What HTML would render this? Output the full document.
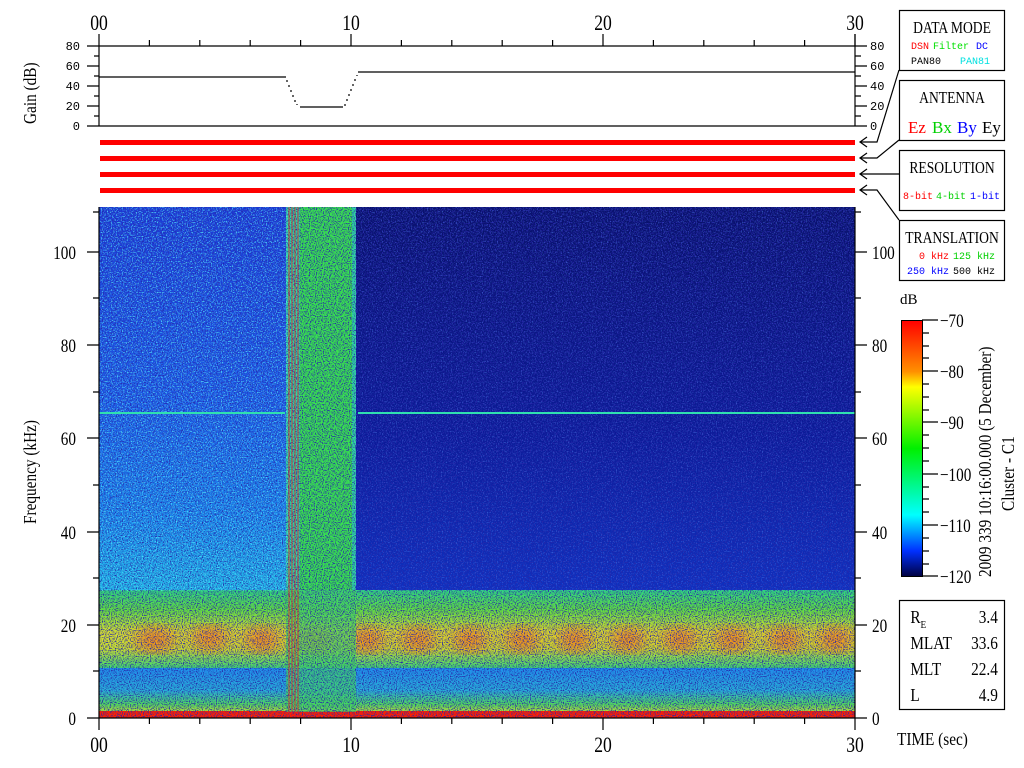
<!DOCTYPE html>
<html><head><meta charset="utf-8"><style>
html,body{margin:0;padding:0;background:#fff;width:1024px;height:768px;overflow:hidden}
svg{display:block}
.s{font-family:"Liberation Serif",serif}
.m{font-family:"Liberation Mono",monospace}
</style></head><body>
<svg width="1024" height="768" viewBox="0 0 1024 768" xmlns="http://www.w3.org/2000/svg">
<defs>
<clipPath id="sp"><rect x="99" y="207" width="756" height="511"/></clipPath>
<filter id="nd" x="0" y="0" width="100%" height="100%">
<feTurbulence type="fractalNoise" baseFrequency="0.85" numOctaves="1" seed="3" result="t"/>
<feColorMatrix in="t" type="matrix" values="0 0 0 0 0.02  0 0 0 0 0.02  0 0 0 0 0.4  4 0 0 0 -1.85"/>
</filter>
<filter id="nb" x="0" y="0" width="100%" height="100%">
<feTurbulence type="fractalNoise" baseFrequency="0.8" numOctaves="1" seed="9" result="t"/>
<feColorMatrix in="t" type="matrix" values="0 0 0 0 0.1  0 0 0 0 0.9  0 0 0 0 1  0 4 0 0 -2"/>
</filter>
<filter id="nbl" x="0" y="0" width="100%" height="100%">
<feTurbulence type="fractalNoise" baseFrequency="0.8" numOctaves="1" seed="17" result="t"/>
<feColorMatrix in="t" type="matrix" values="0 0 0 0 0.1  0 0 0 0 0.3  0 0 0 0 1  0 0 4 0 -2.1"/>
</filter>
<filter id="blob"><feGaussianBlur stdDeviation="8"/></filter>
<linearGradient id="ul" x1="0" y1="0" x2="0" y2="1">
<stop offset="0" stop-color="#1b3bd8"/><stop offset="0.5" stop-color="#1c5ae8"/><stop offset="0.8" stop-color="#1a84ec"/><stop offset="1" stop-color="#20b8e8"/></linearGradient>
<linearGradient id="ur" x1="0" y1="0" x2="0" y2="1">
<stop offset="0" stop-color="#08106a"/><stop offset="0.6" stop-color="#0a1a98"/><stop offset="1" stop-color="#0e30c0"/></linearGradient>
<linearGradient id="band" x1="0" y1="0" x2="0" y2="1">
<stop offset="0" stop-color="#30d880"/><stop offset="0.25" stop-color="#60e040"/><stop offset="0.55" stop-color="#d8e030"/><stop offset="0.75" stop-color="#c8e030"/><stop offset="1" stop-color="#40d870"/></linearGradient>
<linearGradient id="low" x1="0" y1="0" x2="0" y2="1">
<stop offset="0" stop-color="#2090ec"/><stop offset="0.5" stop-color="#28b0d8"/><stop offset="0.8" stop-color="#50d860"/><stop offset="1" stop-color="#c0e030"/></linearGradient>
<linearGradient id="cb" x1="0" y1="0" x2="0" y2="1">
<stop offset="0" stop-color="#ff0000"/><stop offset="0.2" stop-color="#ff9000"/><stop offset="0.26" stop-color="#ffff00"/><stop offset="0.5" stop-color="#00f000"/><stop offset="0.76" stop-color="#00ffff"/><stop offset="0.9" stop-color="#0030ff"/><stop offset="1" stop-color="#000040"/></linearGradient>
</defs>

<g class="s" font-size="22" text-anchor="middle" transform="scale(0.8,1)">
<text x="123.75" y="30">00</text><text x="438.75" y="30">10</text><text x="753.75" y="30">20</text><text x="1068.75" y="30">30</text>
</g>
<g stroke="#000" stroke-width="1.2" fill="none">
<path d="M99 34V126M351 34V46M603 34V46M855 34V46"/>
<path d="M149.4 40V46M199.8 40V46M250.2 40V46M300.6 40V46M401.4 40V46M451.8 40V46M502.2 40V46M552.6 40V46M653.4 40V46M703.8 40V46M754.2 40V46M804.6 40V46"/>
<path d="M87 46H855M87 126H855M855 34V126"/>
<path d="M87 66H99M87 86H99M87 106H99M94 56H99M94 76H99M94 96H99M94 116H99"/>
<path d="M855 66H867M855 86H867M855 106H867M855 46H867M855 126H867M855 56H861M855 76H861M855 96H861M855 116H861"/>
<path d="M99 77H286M300 107H343M358 72H855"/>
<path d="M287 80V82M289 85V87M291 90V92M293 95V97M295 100V102M297 104V105M345 104V106M347 99V101M349 94V96M351 89V91M353 84V86M355 79V81M357 75V76"/>
</g>
<g class="m" font-size="12">
<text x="80" y="50" text-anchor="end">80</text><text x="80" y="70" text-anchor="end">60</text><text x="80" y="90" text-anchor="end">40</text><text x="80" y="110" text-anchor="end">20</text><text x="80" y="130" text-anchor="end">0</text>
<text x="870" y="50">80</text><text x="870" y="70">60</text><text x="870" y="90">40</text><text x="870" y="110">20</text><text x="870" y="130">0</text>
</g>
<text class="s" font-size="18" transform="translate(36,124) rotate(-90) scale(0.85,1)">Gain (dB)</text>

<g fill="#ff0000"><rect x="100" y="140" width="755" height="5"/><rect x="100" y="156" width="755" height="5"/><rect x="100" y="172" width="755" height="5"/><rect x="100" y="188" width="755" height="5"/></g>

<g clip-path="url(#sp)">
<rect x="99" y="207" width="189" height="384" fill="url(#ul)"/>
<rect x="355" y="207" width="500" height="384" fill="url(#ur)"/>
<rect x="286" y="207" width="70" height="384" fill="#30d8a0"/>
<rect x="300" y="207" width="52" height="384" fill="#38e050"/>
<rect x="99" y="590" width="756" height="78" fill="url(#band)"/>
<g fill="#ff6a10" opacity="0.75" filter="url(#blob)">
<ellipse cx="155" cy="640" rx="20" ry="12"/><ellipse cx="210" cy="638" rx="18" ry="12"/><ellipse cx="262" cy="640" rx="18" ry="12"/><ellipse cx="315" cy="640" rx="18" ry="12"/><ellipse cx="367" cy="640" rx="18" ry="12"/><ellipse cx="418" cy="640" rx="18" ry="12"/><ellipse cx="470" cy="640" rx="18" ry="12"/><ellipse cx="522" cy="640" rx="18" ry="12"/><ellipse cx="575" cy="640" rx="18" ry="12"/><ellipse cx="628" cy="640" rx="18" ry="12"/><ellipse cx="680" cy="640" rx="18" ry="12"/><ellipse cx="732" cy="640" rx="18" ry="12"/><ellipse cx="785" cy="640" rx="18" ry="12"/><ellipse cx="835" cy="640" rx="18" ry="12"/>
</g>
<rect x="99" y="668" width="756" height="45" fill="url(#low)"/>
<rect x="99" y="711" width="756" height="7" fill="#ff2000"/>
<rect x="286" y="590" width="70" height="122" fill="#40d860" opacity="0.7"/>
<rect x="99" y="207" width="756" height="511" filter="url(#nd)"/>
<rect x="99" y="207" width="189" height="384" filter="url(#nb)" opacity="0.8"/>
<rect x="355" y="207" width="500" height="384" filter="url(#nbl)" opacity="0.45"/>
<g stroke="#f02020" stroke-width="1" opacity="0.8">
<path d="M289 207V718M292 207V718M295 207V718M298 207V718"/></g>
<path d="M99 413H285M358 413H855" stroke="#30e0b0" stroke-width="2"/>
</g>

<g stroke="#000" stroke-width="1.2" fill="none">
<path d="M99 207V730M855 207V730M99 718H855"/>
<path d="M351 718V730M603 718V730M149.4 718V724M199.8 718V724M250.2 718V724M300.6 718V724M401.4 718V724M451.8 718V724M502.2 718V724M552.6 718V724M653.4 718V724M703.8 718V724M754.2 718V724M804.6 718V724"/>
<path d="M87 718H99M87 625H99M87 532H99M87 438H99M87 345H99M87 252H99M93 671H99M93 578H99M93 485H99M93 392H99M93 298H99M93 212H99"/>
<path d="M855 718H867M855 625H867M855 532H867M855 438H867M855 345H867M855 252H867M855 671H861M855 578H861M855 485H861M855 392H861M855 298H861M855 212H861"/>
</g>
<g class="s" font-size="19" transform="scale(0.8,1)">
<g text-anchor="end">
<text x="95" y="725">0</text><text x="95" y="632">20</text><text x="95" y="539">40</text><text x="95" y="445">60</text><text x="95" y="352">80</text><text x="95" y="259">100</text></g>
<text x="1090" y="725">0</text><text x="1090" y="632">20</text><text x="1090" y="539">40</text><text x="1090" y="445">60</text><text x="1090" y="352">80</text><text x="1090" y="259">100</text>
</g>
<g class="s" font-size="22" text-anchor="middle" transform="scale(0.8,1)">
<text x="123.75" y="752">00</text><text x="438.75" y="752">10</text><text x="753.75" y="752">20</text><text x="1068.75" y="752">30</text>
</g>
<text class="s" font-size="18" transform="translate(36,524) rotate(-90) scale(0.85,1)">Frequency (kHz)</text>
<text class="s" font-size="18" transform="translate(897,745) scale(0.85,1)">TIME (sec)</text>

<g fill="none" stroke="#000" stroke-width="1.2">
<rect x="899.5" y="10.5" width="105" height="60"/>
<rect x="899.5" y="80.5" width="105" height="60"/>
<rect x="899.5" y="150.5" width="105" height="60"/>
<rect x="899.5" y="220.5" width="105" height="60"/>
<path d="M899 70L877 142H860M867 137L860 142L867 147"/>
<path d="M899 140L877 158H860M867 153L860 158L867 163"/>
<path d="M899 174H860M867 169L860 174L867 179"/>
<path d="M899 220L877 190H860M867 185L860 190L867 195"/>
</g>
<g class="s" font-size="17" text-anchor="middle">
<text transform="translate(952,33) scale(0.8,1)">DATA MODE</text>
<text transform="translate(952,103) scale(0.8,1)">ANTENNA</text>
<text transform="translate(952,173) scale(0.8,1)">RESOLUTION</text>
<text transform="translate(952,243) scale(0.8,1)">TRANSLATION</text>
</g>
<g class="m" font-size="10">
<text x="911" y="49" fill="#ff0000">DSN</text><text x="933" y="49" fill="#00e000">Filter</text><text x="976" y="49" fill="#0000ff">DC</text>
<text x="911" y="64" fill="#000">PAN80</text><text x="960" y="64" fill="#00e0e0">PAN81</text>
<text x="903" y="199" fill="#ff0000">8-bit</text><text x="936" y="199" fill="#00d000">4-bit</text><text x="970" y="199" fill="#0000ff">1-bit</text>
<text x="919" y="259" fill="#ff0000">0 kHz</text><text x="953" y="259" fill="#00d000">125 kHz</text>
<text x="907" y="274" fill="#0000ff">250 kHz</text><text x="953" y="274" fill="#000">500 kHz</text>
</g>
<g class="s" font-size="17">
<text x="908" y="133" fill="#ff0000">Ez</text><text x="932" y="133" fill="#00d000">Bx</text><text x="957" y="133" fill="#0000ff">By</text><text x="982" y="133" fill="#000">Ey</text>
</g>

<text class="s" font-size="15" x="900" y="304">dB</text>
<rect x="901.5" y="320.5" width="21" height="256" fill="url(#cb)" stroke="#000"/>
<g stroke="#000" stroke-width="1.2">
<path d="M922 320H938M922 371H938M922 422H938M922 474H938M922 525H938M922 576H938"/>
<path d="M922 333H929M922 346H929M922 358H929M922 384H929M922 397H929M922 410H929M922 435H929M922 448H929M922 461H929M922 487H929M922 499H929M922 512H929M922 538H929M922 551H929M922 564H929"/>
</g>
<g class="s" font-size="19" transform="scale(0.8,1)">
<text x="1175" y="327">−70</text><text x="1175" y="378">−80</text><text x="1175" y="429">−90</text><text x="1175" y="481">−100</text><text x="1175" y="532">−110</text><text x="1175" y="583">−120</text>
</g>
<text class="s" font-size="18" transform="translate(991,577) rotate(-90) scale(0.85,1)">2009 339 10:16:00.000 (5 December)</text>
<text class="s" font-size="18" transform="translate(1014,511) rotate(-90) scale(0.85,1)">Cluster - C1</text>

<rect x="899.5" y="600.5" width="105" height="109" fill="none" stroke="#000" stroke-width="1.2"/>
<g class="s" font-size="18" transform="scale(0.85,1)">
<text x="1071" y="623">R</text><text x="1083" y="628" font-size="11">E</text>
<text x="1071" y="649">MLAT</text><text x="1071" y="675">MLT</text><text x="1071" y="701">L</text>
<g text-anchor="end"><text x="1174" y="623">3.4</text><text x="1174" y="649">33.6</text><text x="1174" y="675">22.4</text><text x="1174" y="701">4.9</text></g>
</g>
</svg>
</body></html>
